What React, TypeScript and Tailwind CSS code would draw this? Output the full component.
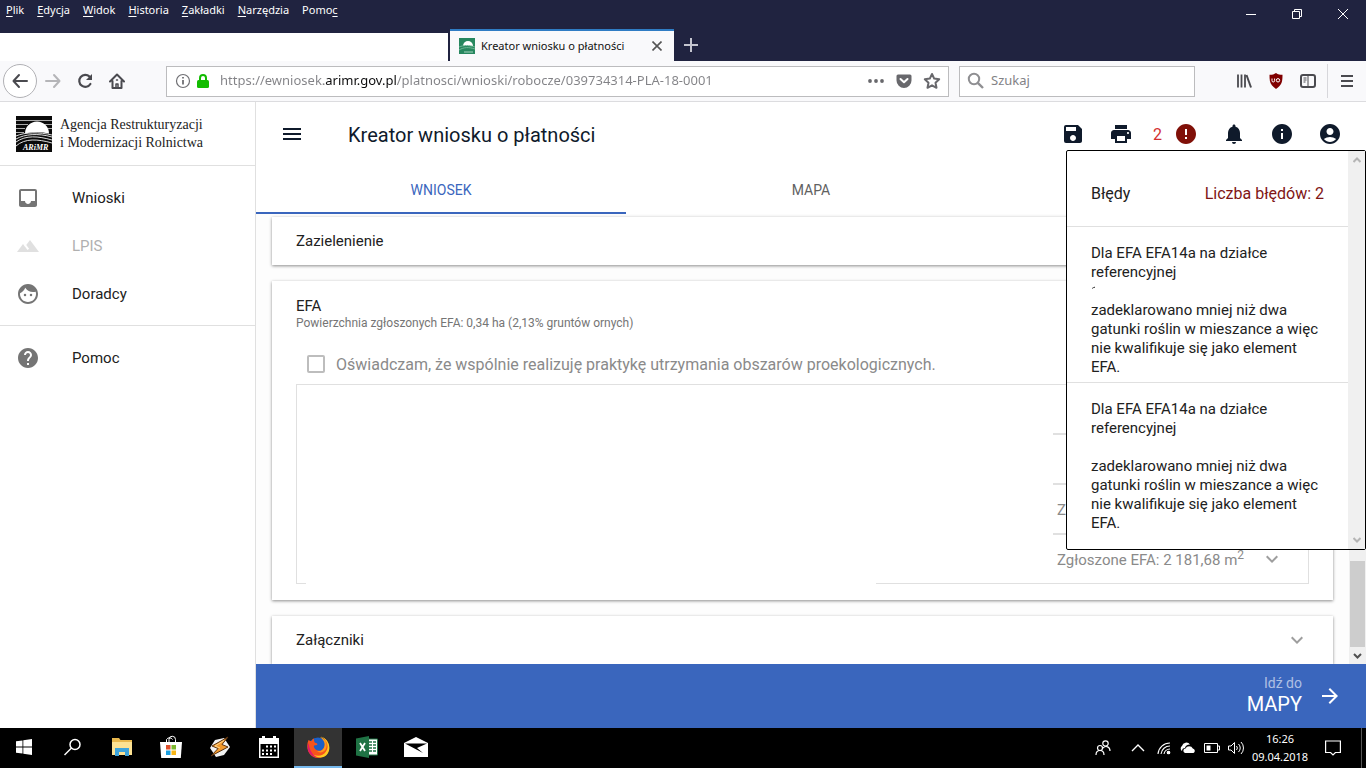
import type { ReactNode } from "react";
import { useState } from "react";
import {
  MdAccountCircle,
  MdArrowForward,
  MdError,
  MdExpandMore,
  MdFace,
  MdHelp,
  MdInbox,
  MdInfo,
  MdMenu,
  MdNotifications,
  MdPrint,
  MdSave,
  MdTerrain,
} from "react-icons/md";

const MENU = [
  { before: "", key: "P", after: "lik" },
  { before: "", key: "E", after: "dycja" },
  { before: "", key: "W", after: "idok" },
  { before: "", key: "H", after: "istoria" },
  { before: "", key: "Z", after: "akładki" },
  { before: "", key: "N", after: "arzędzia" },
  { before: "Pomo", key: "c", after: "" },
];

const TABS = ["WNIOSEK", "MAPA", ""];

const ERRORS = [
  { id: 1, marked: true },
  { id: 2, marked: false },
];

// ── BROWSER ──────────────────────────────────────────

function BrowserHeader() {
  return (
    <header className="shrink-0 bg-[#202340] font-['Noto_Sans',sans-serif] text-xs">
      <div className="flex h-[29px] items-start justify-between">
        <nav className="flex gap-[13px] pl-[6px] pt-[2px] text-[11px] leading-4 text-white">
          {MENU.map((m) => (
            <button key={m.key}>
              {m.before}
              <span className="underline underline-offset-2">{m.key}</span>
              {m.after}
            </button>
          ))}
        </nav>
        <div className="flex text-white">
          <button aria-label="Minimalizuj" className="flex h-7 w-[46px] items-center justify-center">
            <svg width="10" height="10" viewBox="0 0 10 10" stroke="currentColor">
              <path d="M0 5.5h10" />
            </svg>
          </button>
          <button aria-label="Przywróć" className="flex h-7 w-[46px] items-center justify-center">
            <svg width="10" height="10" viewBox="0 0 10 10" fill="none" stroke="currentColor">
              <path d="M.5 2.5h7v7h-7zM2.5 2.5v-2h7v7h-2" />
            </svg>
          </button>
          <button aria-label="Zamknij" className="flex h-7 w-[46px] items-center justify-center">
            <svg width="10" height="10" viewBox="0 0 10 10" stroke="currentColor">
              <path d="M0 0l10 10M10 0L0 10" />
            </svg>
          </button>
        </div>
      </div>
      <div className="flex h-8 items-end">
        <div className="mr-[2px] h-7 w-[448px] bg-white" />
        <div className="flex h-8 w-56 items-center border-t-2 border-[#2f7cc4] bg-[#f9f9fb] pl-[9px] pr-[7px]">
          <svg width="16" height="16" viewBox="0 0 16 16">
            <rect width="16" height="16" fill="#27875f" />
            <path d="M4 8a5 5 0 0 1 10 0z" fill="#fff" />
            <path d="M0 9c5-2 10-2 16 0M0 12c5-3 10-3 16-1" stroke="#6fb796" fill="none" />
            <path d="M5 14h9" stroke="#a6d3bf" />
          </svg>
          <span className="ml-[6px] flex-1 whitespace-nowrap text-[11px] text-[#111]">
            Kreator wniosku o płatności
          </span>
          <button aria-label="Zamknij kartę" className="flex h-5 w-5 items-center justify-center text-[#555]">
            <svg width="10" height="10" viewBox="0 0 10 10" stroke="currentColor" strokeWidth="1.6">
              <path d="M.5.5l9 9M9.5.5l-9 9" />
            </svg>
          </button>
        </div>
        <button aria-label="Nowa karta" className="flex h-8 w-[34px] items-center justify-center text-[#c4c5cf]">
          <svg width="14" height="14" viewBox="0 0 14 14" stroke="currentColor" strokeWidth="2">
            <path d="M7 0v14M0 7h14" />
          </svg>
        </button>
      </div>
    </header>
  );
}

function BrowserToolbar() {
  return (
    <div className="flex h-[41px] shrink-0 items-center border-b border-[#dcdcdf] bg-[#f9f9fb] font-['Noto_Sans',sans-serif] text-[#4a4a4f]">
      <button
        aria-label="Wstecz"
        className="ml-[3px] flex h-[34px] w-[34px] items-center justify-center rounded-full border border-[#b1b1b5] bg-white"
      >
        <svg width="16" height="16" viewBox="0 0 16 16" fill="none" stroke="currentColor" strokeWidth="2" strokeLinecap="round" strokeLinejoin="round">
          <path d="M7 2L1.500 8L7 14M2 8h13" />
        </svg>
      </button>
      <button aria-label="Dalej" className="flex h-8 w-8 items-center justify-center text-[#b5b5b8]">
        <svg width="16" height="16" viewBox="0 0 16 16" fill="none" stroke="currentColor" strokeWidth="2" strokeLinecap="round" strokeLinejoin="round">
          <path d="M9 2l5.500 6L9 14M14 8H1" />
        </svg>
      </button>
      <button aria-label="Odśwież" className="flex h-8 w-8 items-center justify-center">
        <svg width="16" height="16" viewBox="0 0 16 16" fill="none" stroke="currentColor" strokeWidth="2.2" strokeLinecap="round">
          <path d="M12.500 3.600A6 6 0 1 0 13.400 11" />
          <path d="M15 1v6H9z" fill="currentColor" stroke="none" />
        </svg>
      </button>
      <button aria-label="Strona startowa" className="flex h-8 w-8 items-center justify-center">
        <svg width="16" height="16" viewBox="0 0 16 16" fill="none" stroke="currentColor" strokeWidth="2" strokeLinejoin="round" strokeLinecap="round">
          <path d="M1 8.500L8 1.500l7 7M3.500 8v7h9V8" />
          <path d="M7 15v-4h2v4M7.500 7h1" strokeWidth="1.500" />
        </svg>
      </button>
      <div className="ml-[33px] flex h-[31px] min-w-0 flex-1 items-center border border-[#bcbcbe] bg-white pl-2 pr-[2px]">
        <svg width="16" height="16" viewBox="0 0 16 16" fill="none" stroke="#6f6f73" className="shrink-0">
          <circle cx="8" cy="8" r="6.500" strokeWidth="1.200" />
          <path d="M8 7v4.500M8 4v1.600" strokeWidth="1.800" />
        </svg>
        <svg width="14" height="16" viewBox="0 0 14 16" className="ml-[5px] shrink-0">
          <rect x="1" y="7" width="12" height="8" rx="1.500" fill="#12bc00" />
          <path d="M4 8V5a3 3 0 0 1 6 0v3" fill="none" stroke="#12bc00" strokeWidth="2" />
        </svg>
        <input
          type="text"
          aria-label="Adres"
          defaultValue="https://ewniosek.arimr.gov.pl/platnosci/wnioski/robocze/039734314-PLA-18-0001"
          className="ml-[10px] min-w-0 flex-1 bg-[linear-gradient(to_right,#828286_104px,#0c0c0d_104px,#0c0c0d_176px,#828286_176px)] bg-clip-text text-[13px] text-transparent outline-none"
        />
        <button aria-label="Działania strony" className="flex h-7 w-7 items-center justify-center">
          <svg width="16" height="4" viewBox="0 0 16 4" fill="#68686c">
            <circle cx="2" cy="2" r="1.900" />
            <circle cx="8" cy="2" r="1.900" />
            <circle cx="14" cy="2" r="1.900" />
          </svg>
        </button>
        <button aria-label="Wyślij do Pocket" className="flex h-7 w-7 items-center justify-center">
          <svg width="16" height="16" viewBox="0 0 16 16">
            <path d="M2 1.500h12a1.500 1.500 0 0 1 1.500 1.500v4.500a7.500 7.500 0 0 1-15 0V3A1.500 1.500 0 0 1 2 1.500z" fill="#68686c" />
            <path d="M4.500 6L8 9.300 11.500 6" stroke="#fff" strokeWidth="2" fill="none" strokeLinecap="round" strokeLinejoin="round" />
          </svg>
        </button>
        <button aria-label="Dodaj zakładkę" className="flex h-7 w-7 items-center justify-center">
          <svg width="18" height="18" viewBox="0 0 18 18" fill="none" stroke="#68686c" strokeWidth="2" strokeLinejoin="round">
            <path d="M9 2l2.200 4.600 5 .6-3.700 3.500 1 5.100L9 13.300l-4.500 2.500 1-5.100L1.800 7.200l5-.6z" />
          </svg>
        </button>
      </div>
      <label className="ml-[10px] flex h-[31px] w-[236px] shrink-0 items-center border border-[#bcbcbe] bg-white pl-[7px]">
        <svg width="18" height="18" viewBox="0 0 18 18" fill="none" stroke="#8f8f92" strokeWidth="2">
          <circle cx="7" cy="7" r="5.200" />
          <path d="M10.800 10.800L16 16" strokeWidth="2.400" />
        </svg>
        <input
          type="search"
          aria-label="Szukaj"
          placeholder="Szukaj"
          className="ml-[6px] min-w-0 flex-1 text-[13px] outline-none placeholder:text-[#828286]"
        />
      </label>
      <div className="ml-[33px] flex shrink-0 items-center pr-[3px]">
        <button aria-label="Biblioteka" className="flex h-8 w-8 items-center justify-center">
          <svg width="16" height="16" viewBox="0 0 16 16" stroke="currentColor" strokeWidth="2">
            <path d="M2 1.500v13M5.500 1.500v13M9 1.500v13" strokeWidth="1.800" />
            <path d="M10.500 2L15 14.500" />
          </svg>
        </button>
        <button aria-label="uBlock Origin" className="flex h-8 w-8 items-center justify-center">
          <svg width="16" height="16" viewBox="0 0 16 16">
            <path d="M8 0c2 1.500 4 1.800 6.500 1.800 0 7-.5 10-6.500 14.200C2 11.800 1.500 8.800 1.500 1.800 4 1.800 6 1.500 8 0z" fill="#800000" />
            <path d="M4 5.500v2.200a1.300 1.300 0 0 0 2.600 0V5.500" fill="none" stroke="#fff" />
            <circle cx="10" cy="7.300" r="1.700" fill="none" stroke="#fff" />
          </svg>
        </button>
        <button aria-label="Panel boczny" className="flex h-8 w-8 items-center justify-center">
          <svg width="16" height="16" viewBox="0 0 16 16" fill="none" stroke="currentColor">
            <rect x="1" y="2" width="14" height="12" rx="2" strokeWidth="2" />
            <path d="M8 2v12M3.500 5h3M3.500 7h3M3.500 9h2" />
          </svg>
        </button>
        <span className="mx-[3px] h-[34px] w-px bg-[#d7d7db]" />
        <button aria-label="Menu" className="flex h-8 w-8 items-center justify-center">
          <svg width="12" height="12" viewBox="0 0 12 12" stroke="currentColor" strokeWidth="2">
            <path d="M0 1h12M0 6h12M0 11h12" />
          </svg>
        </button>
      </div>
    </div>
  );
}

// ── APPLICATION ──────────────────────────────────────────

interface NavItemProps {
  icon: ReactNode;
  label: string;
  disabled?: boolean;
}

function NavItem({ icon, label, disabled }: NavItemProps) {
  return (
    <a
      href="#"
      aria-disabled={disabled}
      className={`flex h-12 items-center gap-8 px-4 text-[15px] ${disabled ? "text-[#b0b0b0]" : "text-[#212121]"}`}
    >
      <span className={disabled ? "text-[#e0e0e0]" : "text-[#757575]"}>{icon}</span>
      <span className="pt-px">{label}</span>
    </a>
  );
}

function Sidebar() {
  return (
    <aside className="w-64 shrink-0 border-r border-[#e0e0e0] bg-white">
      <div className="flex h-16 items-center gap-2 border-b border-[#e0e0e0] pl-4">
        <svg width="36" height="36" viewBox="0 0 36 36" className="shrink-0">
          <rect width="36" height="36" fill="#0a0a0a" />
          <path d="M0 4.500h36M0 8.500h12M28 8.500h8M0 12.500h9M32 12.500h4M0 16.500h8" stroke="#aaa" strokeWidth="1" />
          <path d="M9 17.500a12 12 0 0 1 24 0q-12-2.500-24 0z" fill="#fff" />
          <path d="M0 20c9-4 24-4 36-1M0 23c9-5 22-6 36-2M0 26c10-7 22-6 36-2M0 30c9-8 22-7 36-3" fill="none" stroke="#ddd" strokeWidth="1" />
          <path d="M5 36c1-6 5-8 10-8h21v8z" fill="#0a0a0a" />
          <text x="7" y="34" fill="#fff" className="font-['Liberation_Serif',serif] text-[8px] font-bold italic">
            ARiMR
          </text>
        </svg>
        <p className="whitespace-nowrap font-['Liberation_Serif',serif] text-[14px] leading-[18px] text-[#222]">
          Agencja Restrukturyzacji
          <br />i Modernizacji Rolnictwa
        </p>
      </div>
      <nav>
        <div className="border-b border-[#e0e0e0] pb-[7px] pt-2">
          <NavItem icon={<MdInbox size={24} />} label="Wnioski" />
          <NavItem icon={<MdTerrain size={24} />} label="LPIS" disabled />
          <NavItem icon={<MdFace size={24} />} label="Doradcy" />
        </div>
        <div className="py-2">
          <NavItem icon={<MdHelp size={24} />} label="Pomoc" />
        </div>
      </nav>
    </aside>
  );
}

function ErrorPanel() {
  return (
    <section className="absolute right-0 top-12 z-10 flex w-[300px] rounded-xs border border-black bg-white text-[15px] leading-[19px] text-[#212121]">
      <div className="min-w-0 flex-1">
        <div className="flex h-[76px] items-center justify-between border-b border-[#e0e0e0] px-6 pt-[10px] text-base">
          <h2>Błędy</h2>
          <span className="text-[#801515]">Liczba błędów: 2</span>
        </div>
        <ul>
          {ERRORS.map((err) => (
            <li key={err.id} className="border-b border-[#e0e0e0] pb-[5px] pl-6 pr-6 pt-[17px] last:border-b-0 last:pb-4">
              <p>Dla EFA EFA14a na działce referencyjnej</p>
              <div className="h-[19px] pt-1">
                {err.marked && (
                  <svg width="6" height="4" viewBox="0 0 6 4" fill="none" stroke="#555">
                    <path d="M1 2.500L3.500 1v1" />
                  </svg>
                )}
              </div>
              <p>zadeklarowano mniej niż dwa gatunki roślin w mieszance a więc nie kwalifikuje się jako element EFA.</p>
            </li>
          ))}
        </ul>
      </div>
      <div className="flex w-[17px] shrink-0 flex-col items-center justify-between bg-[#f0f0f0] py-[5px] text-[#b5b5b5]">
        <svg width="8" height="8" viewBox="0 0 8 8" fill="none" stroke="currentColor" strokeWidth="2">
          <path d="M.5 6L4 2.500 7.500 6" />
        </svg>
        <svg width="8" height="8" viewBox="0 0 8 8" fill="none" stroke="currentColor" strokeWidth="2">
          <path d="M.5 2L4 5.500 7.500 2" />
        </svg>
      </div>
    </section>
  );
}

function AppHeader() {
  const [active, setActive] = useState("WNIOSEK");

  return (
    <header className="relative shrink-0 bg-white">
      <div className="flex h-16 items-center justify-between px-6 text-[#0f1a2b]">
        <div className="flex items-center gap-11">
          <button aria-label="Menu aplikacji">
            <MdMenu size={24} />
          </button>
          <h1 className="pt-px text-xl">Kreator wniosku o płatności</h1>
        </div>
        <div className="flex items-center gap-6">
          <button aria-label="Zapisz"><MdSave size={24} /></button>
          <button aria-label="Drukuj"><MdPrint size={24} /></button>
          <button aria-label="Błędy" className="-ml-1 flex items-center gap-3 text-[#801008]">
            <span className="pt-px text-base text-[#d32f2f]">2</span>
            <MdError size={24} />
          </button>
          <button aria-label="Powiadomienia"><MdNotifications size={24} /></button>
          <button aria-label="Informacje"><MdInfo size={24} /></button>
          <button aria-label="Konto"><MdAccountCircle size={24} /></button>
        </div>
      </div>
      <div role="tablist" className="grid grid-cols-3">
        {TABS.map((tab) => (
          <button
            key={tab}
            role="tab"
            aria-selected={tab === active}
            onClick={() => setActive(tab)}
            className={`h-12 border-b-2 pt-[2px] text-sm ${
              tab === active ? "border-[#3a66bd] text-[#3a66bd]" : "border-transparent text-[#616161]"
            }`}
          >
            {tab}
          </button>
        ))}
      </div>
      <ErrorPanel />
    </header>
  );
}

function EfaRow({ children }: { children?: ReactNode }) {
  return (
    <div className="flex h-[50px] justify-end">
      <div className="flex w-[255px] items-center justify-between border-t-2 border-[#e0e0e0] pl-1 pr-6 text-[#8a8a8a]">
        {children}
      </div>
    </div>
  );
}

function Content() {
  const [joint, setJoint] = useState(false);
  const card = "bg-white px-6 shadow-[0_1px_3px_rgba(0,0,0,0.45)]";

  return (
    <div className="flex min-h-0 flex-1">
      <div className="flex min-w-0 flex-1 flex-col gap-4 overflow-hidden bg-[#fdfdfd] px-4 pt-[3px] text-[15px] text-[#212121]">
        <section className={`${card} flex h-12 shrink-0 items-center`}>
          <h2 className="pt-px">Zazielenienie</h2>
        </section>
        <section className={`${card} shrink-0 pb-4 pt-[15px]`}>
          <h2 className="leading-5">EFA</h2>
          <p className="text-xs leading-[15px] text-[#757575]">
            Powierzchnia zgłoszonych EFA: 0,34 ha (2,13% gruntów ornych)
          </p>
          <label className="mt-3 flex h-[41px] items-center gap-[11px] pl-[11px] text-base text-[#8a8a8a]">
            <input
              type="checkbox"
              checked={joint}
              onChange={(e) => setJoint(e.target.checked)}
              className="h-[18px] w-[18px] appearance-none rounded-xs border-2 border-[#bdbdbd] checked:bg-[#3a66bd]"
            />
            <span className="pt-[2px]">
              Oświadczam, że wspólnie realizuję praktykę utrzymania obszarów proekologicznych.
            </span>
          </label>
          <div className="border-x border-t border-[#e0e0e0] pt-12">
            <EfaRow />
            <EfaRow>
              <span className="pt-[2px]">Zgłoszone EFA</span>
            </EfaRow>
            <EfaRow>
              <span className="whitespace-nowrap pt-[2px]">
                Zgłoszone EFA: 2 181,68 m<sup className="text-xs">2</sup>
              </span>
              <button aria-label="Rozwiń" className="text-[#9e9e9e]"><MdExpandMore size={24} /></button>
            </EfaRow>
          </div>
          <div className="flex h-px justify-between">
            <span className="w-[10px] bg-[#e0e0e0]" />
            <span className="w-[433px] bg-[#e0e0e0]" />
          </div>
        </section>
        <section className={`${card} flex h-12 shrink-0 items-center justify-between`}>
          <h2 className="pt-px">Załączniki</h2>
          <button aria-label="Rozwiń załączniki" className="text-[#9e9e9e]"><MdExpandMore size={24} /></button>
        </section>
      </div>
      <div className="flex w-[17px] shrink-0 flex-col items-center justify-end bg-[#f0f0f0]">
        <div className="h-[86px] w-[15px] bg-[#cdcdcd]" />
        <svg width="17" height="17" viewBox="0 0 17 17" fill="none" stroke="#505050" strokeWidth="2">
          <path d="M5 7l3.500 3.500L12 7" />
        </svg>
      </div>
    </div>
  );
}

// ── TASKBAR ──────────────────────────────────────────

function TaskButton({ label, active, children }: { label: string; active?: boolean; children: ReactNode }) {
  return (
    <button
      aria-label={label}
      className={`flex h-10 w-12 items-center justify-center border-b-2 ${
        active ? "border-[#76b9ed] bg-[#333333]" : "border-transparent"
      }`}
    >
      {children}
    </button>
  );
}

function Taskbar() {
  return (
    <footer className="flex h-10 shrink-0 justify-between bg-black text-white">
      <div className="flex gap-px">
        <TaskButton label="Start">
          <svg width="16" height="16" viewBox="0 0 16 16" fill="#fff">
            <path d="M0 2.300L6.500 1.400v6.100H0zM7.300 1.300L16 0v7.500H7.300zM0 8.400h6.500v6.200L0 13.700zM7.300 8.400H16V16l-8.700-1.300z" />
          </svg>
        </TaskButton>
        <TaskButton label="Wyszukaj">
          <svg width="18" height="18" viewBox="0 0 18 18" fill="none" stroke="#fff" strokeWidth="1.500">
            <circle cx="11" cy="6.500" r="5" />
            <path d="M7.500 10l-7 7" />
          </svg>
        </TaskButton>
        <TaskButton label="Eksplorator plików">
          <svg width="22" height="20" viewBox="0 0 22 20">
            <path d="M1 1h7l1.500 2H21v15H1z" fill="#e9b84d" />
            <path d="M1 5h20v13H1z" fill="#fde293" />
            <path d="M4 19v-8h14v8h-4v-4H8v4z" fill="#3ea4dc" />
          </svg>
        </TaskButton>
        <TaskButton label="Sklep">
          <svg width="24" height="24" viewBox="0 0 24 24">
            <path d="M7.500 7V4.500a3.500 3.500 0 0 1 6 0M10 7V4.500a3 3 0 0 1 6.500 0V7" fill="none" stroke="#fff" />
            <path d="M1 7h22l-1.200 16H2.200z" fill="#fff" />
            <path d="M7 10h4.500v4.500H7z" fill="#e04f2b" />
            <path d="M12.500 10H17v4.500h-4.500z" fill="#7cb82f" />
            <path d="M7 15.500h4.500V20H7z" fill="#1a9fe0" />
            <path d="M12.500 15.500H17V20h-4.500z" fill="#f8b617" />
          </svg>
        </TaskButton>
        <TaskButton label="Winamp">
          <svg width="22" height="22" viewBox="0 0 22 22">
            <path d="M6 4l9-2 6 9-6 8-8 2-6-9z" fill="#f2f2f2" />
            <path d="M19 1L3 10l6 2.500L2 20l17-9-6-2.500z" fill="#f39a2d" stroke="#5a3210" strokeWidth="1" />
            <path d="M15 4.500L6 10l5 2" fill="none" stroke="#ffd58a" />
          </svg>
        </TaskButton>
        <TaskButton label="Kalendarz">
          <svg width="20" height="22" viewBox="0 0 20 22">
            <path d="M3 0h3v2h8V0h3v2h3v20H0V2h3z" fill="#fff" />
            <path d="M1.500 8h17v12.500h-17z" fill="#000" />
            <path d="M7 10.500h11M3 14.500h15M3 18h11" stroke="#fff" strokeWidth="2" strokeDasharray="2 2" />
          </svg>
        </TaskButton>
        <TaskButton label="Firefox" active>
          <svg width="24" height="24" viewBox="0 0 24 24">
            <circle cx="12" cy="12.500" r="10" fill="#1c5fc6" />
            <path d="M2.500 5C-1 13 3 23 12 23c7 0 12-5 11-12-.4-3-2-6-5-8 1.500 3 1.500 6 .5 8.500-1.500 4-5 5-8 3.500-2-1-3-3-2.500-4.500l3-.5c1-.8 0-2-1.500-2C8 7 8 6 8 3.500 6.500 4 6 5 5.500 6 4.500 6 3 5.500 2.500 5z" fill="#f6541c" />
            <path d="M15 1.500c7 4 8 11 5 15-3 4.500-8 5.500-13 3 6 5 14 3.500 16-4 1.500-6-2-12-8-14z" fill="#ffcb22" />
            <path d="M14 2c4 3 5 6 4.500 9-.7 4-4 6-8 5 4 3 9 1 10-4s-2-9-6.500-10z" fill="#ff9a1c" />
            <path d="M2.500 8c-2 5 0 10 3 12 2 2 5 2.500 5 2.500C6 19 3.500 15 2.500 8z" fill="#e1186b" />
          </svg>
        </TaskButton>
        <TaskButton label="Excel">
          <svg width="22" height="22" viewBox="0 0 22 22">
            <path d="M10 3h11.500v16H10z" fill="#fff" stroke="#1f7244" />
            <path d="M13 6h3M17 6h3M13 9h3M17 9h3M13 12h3M17 12h3M13 15h3M17 15h3" stroke="#1f7244" strokeWidth="1.500" />
            <path d="M0 2.500L13 0v22L0 19.500z" fill="#1f7244" />
            <path d="M4 7l5 8M9 7l-5 8" stroke="#fff" strokeWidth="1.800" />
          </svg>
        </TaskButton>
        <TaskButton label="Poczta">
          <svg width="24" height="20" viewBox="0 0 24 20">
            <path d="M12 0l12 6v14H0V6z" fill="#fff" />
            <path d="M1 6.500h22L13 11l6 5z" fill="#000" />
          </svg>
        </TaskButton>
      </div>
      <div className="flex items-center font-['Noto_Sans',sans-serif]">
        <button aria-label="Kontakty" className="mr-5">
          <svg width="16" height="16" viewBox="0 0 16 16" fill="none" stroke="#fff" strokeWidth="1.200">
            <circle cx="10.500" cy="3.500" r="2.700" />
            <circle cx="5" cy="8" r="2.500" />
            <path d="M1 15c0-6 8-6 8 0M8 8c3-3 7-1 7 3" />
          </svg>
        </button>
        <div className="flex items-center gap-2">
          <button aria-label="Pokaż ukryte ikony" className="mr-1">
            <svg width="14" height="16" viewBox="0 0 14 16" fill="none" stroke="#fff" strokeWidth="1.400">
              <path d="M1 11l6-6 6 6" />
            </svg>
          </button>
          <svg width="14" height="14" viewBox="0 0 14 14" fill="none" stroke="#fff" strokeWidth="1.100">
            <path d="M1 13A12 12 0 0 1 13 2M4 13a9 9 0 0 1 9-8M7 13a6 6 0 0 1 6-5" />
            <circle cx="11.500" cy="11.500" r="1.300" fill="#fff" />
          </svg>
          <svg width="17" height="12" viewBox="0 0 17 12" fill="#fff">
            <path d="M3 9a3 3 0 0 1 0-5 4.500 4.500 0 0 1 8-1.500C8 2.500 6.500 4 6 6 4 6 3 7 3 9z" />
            <path d="M6 11a2.300 2.300 0 0 1 .5-4.500 4 4 0 0 1 7.300 0A2.400 2.400 0 0 1 14.500 11z" />
          </svg>
          <svg width="16" height="12" viewBox="0 0 16 12" fill="none" stroke="#fff">
            <path d="M.5 1.500h13v9H.5zM14 4h1.500v4H14" />
            <path d="M2.500 3.500h4v5h-4z" fill="#fff" stroke="none" />
          </svg>
          <svg width="17" height="14" viewBox="0 0 17 14" fill="none" stroke="#fff">
            <path d="M.5 5v4h2.500l3.500 3.500v-11L3 5zM8.500 5a3 3 0 0 1 0 4M10.500 3a5.500 5.500 0 0 1 0 8M13 1a8.500 8.500 0 0 1 0 12" />
          </svg>
        </div>
        <div className="ml-[6px] w-[58px] text-center text-[11px] leading-[18px]">
          16:26
          <br />
          09.04.2018
        </div>
        <button aria-label="Centrum akcji" className="ml-4 mr-5">
          <svg width="16" height="16" viewBox="0 0 16 16" fill="none" stroke="#fff" strokeWidth="1.200">
            <path d="M.6 1h14.800v11.500h-5L8 15l-2.400-2.500h-5z" />
          </svg>
        </button>
        <span className="mr-1 h-full w-px bg-[#555]" />
      </div>
    </footer>
  );
}

export default function App() {
  return (
    <div className="flex h-screen flex-col overflow-hidden bg-white font-[Roboto,sans-serif]">
      <BrowserHeader />
      <BrowserToolbar />
      <div className="flex min-h-0 flex-1">
        <Sidebar />
        <main className="flex min-w-0 flex-1 flex-col">
          <AppHeader />
          <Content />
          <div className="flex h-16 shrink-0 justify-end bg-[#3a66bd] px-6 text-white">
            <button className="flex items-center gap-4">
              <span className="flex flex-col pb-1 text-right">
                <span className="text-sm text-white/60">Idź do</span>
                <span className="text-xl leading-[22px]">MAPY</span>
              </span>
              <MdArrowForward size={24} />
            </button>
          </div>
        </main>
      </div>
      <Taskbar />
    </div>
  );
}
